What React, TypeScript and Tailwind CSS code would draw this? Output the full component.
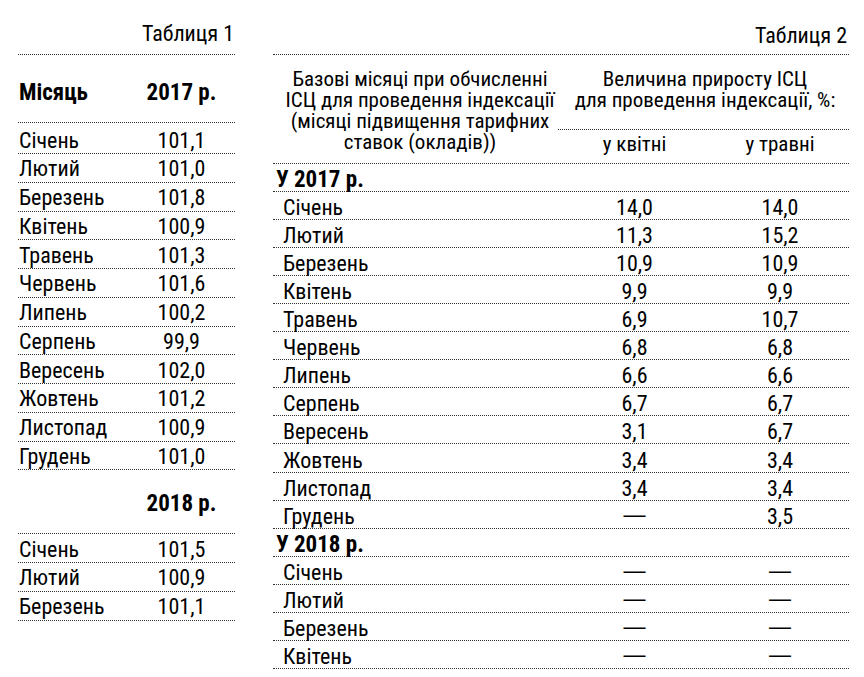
const DOT = "border-b border-dotted border-[#333]";

const t1a: [string, string][] = [
  ["Січень", "101,1"],
  ["Лютий", "101,0"],
  ["Березень", "101,8"],
  ["Квітень", "100,9"],
  ["Травень", "101,3"],
  ["Червень", "101,6"],
  ["Липень", "100,2"],
  ["Серпень", "99,9"],
  ["Вересень", "102,0"],
  ["Жовтень", "101,2"],
  ["Листопад", "100,9"],
  ["Грудень", "101,0"],
];

const t1b: [string, string][] = [
  ["Січень", "101,5"],
  ["Лютий", "100,9"],
  ["Березень", "101,1"],
];

const t2a: [string, string, string][] = [
  ["Січень", "14,0", "14,0"],
  ["Лютий", "11,3", "15,2"],
  ["Березень", "10,9", "10,9"],
  ["Квітень", "9,9", "9,9"],
  ["Травень", "6,9", "10,7"],
  ["Червень", "6,8", "6,8"],
  ["Липень", "6,6", "6,6"],
  ["Серпень", "6,7", "6,7"],
  ["Вересень", "3,1", "6,7"],
  ["Жовтень", "3,4", "3,4"],
  ["Листопад", "3,4", "3,4"],
  ["Грудень", "—", "3,5"],
];

const t2b: [string, string, string][] = [
  ["Січень", "—", "—"],
  ["Лютий", "—", "—"],
  ["Березень", "—", "—"],
  ["Квітень", "—", "—"],
];

function Val({ v }: { v: string }) {
  if (v === "—") {
    return <span className="font-['Liberation_Sans',sans-serif] relative top-[-2px]">—</span>;
  }
  return <>{v}</>;
}

function Row1({ m, v, first }: { m: string; v: string; first?: boolean }) {
  return (
    <div className={`${first ? "h-[31px]" : "h-[28.75px]"} ${DOT} flex items-end`}>
      <div className="w-[110px] leading-none pb-[1.5px] pl-[1px]">{m}</div>
      <div className="flex-1 text-center leading-none pb-[1.5px]">{v}</div>
    </div>
  );
}

function Row2({ m, a, b }: { m: string; a: string; b: string }) {
  return (
    <div className={`h-[28.05px] ${DOT} flex items-end`}>
      <div className="w-[285px] leading-none pl-[10px]">{m}</div>
      <div className="w-[153px] text-center leading-none">
        <Val v={a} />
      </div>
      <div className="flex-1 text-center leading-none">
        <Val v={b} />
      </div>
    </div>
  );
}

function Section2({ label }: { label: string }) {
  return (
    <div className={`h-[28.05px] ${DOT} flex items-end`}>
      <div className="leading-none pl-[3px] font-bold text-[23px]">{label}</div>
    </div>
  );
}

export default function App() {
  return (
    <div className="w-[864px] h-[677px] bg-white text-[#000] font-['Roboto_Condensed','Liberation_Sans',sans-serif] text-[22px] flex">
      {/* Table 1 */}
      <div className="ml-[18px] w-[217px] flex flex-col">
        <div className={`h-[55px] ${DOT} flex items-end justify-end`}>
          <span className="leading-none pb-[9px] pr-[1px]">Таблиця 1</span>
        </div>
        <div className={`h-[68px] ${DOT} flex items-end font-bold text-[23px]`}>
          <div className="w-[110px] leading-none pb-[18px] pl-[1px]">Місяць</div>
          <div className="flex-1 text-center leading-none pb-[18px]">2017 р.</div>
        </div>
        {t1a.map(([m, v], i) => (
          <Row1 key={"a" + m} m={m} v={v} first={i === 0} />
        ))}
        <div className={`h-[64px] ${DOT} flex items-end font-bold text-[23px]`}>
          <div className="w-[110px]" />
          <div className="flex-1 text-center leading-none pb-[18px]">2018 р.</div>
        </div>
        {t1b.map(([m, v]) => (
          <Row1 key={"b" + m} m={m} v={v} />
        ))}
      </div>

      {/* Table 2 */}
      <div className="ml-[38px] w-[576px] flex flex-col">
        <div className={`h-[55px] ${DOT} flex items-end justify-end`}>
          <span className="leading-none pb-[7px] pr-[2px]">Таблиця 2</span>
        </div>
        <div className={`h-[109px] ${DOT} flex`}>
          <div className="w-[285px] pl-[9px] pt-[14px] text-center leading-[21px] text-[21px] whitespace-nowrap">
            Базові місяці при обчисленні
            <br />
            ІСЦ для проведення індексації
            <br />
            (місяці підвищення тарифних
            <br />
            ставок (окладів))
          </div>
          <div className="flex-1 flex flex-col">
            <div className={`h-[75px] ${DOT} pl-[3px] pt-[14px] text-center leading-[21px] text-[21px] whitespace-nowrap`}>
              Величина приросту ІСЦ
              <br />
              для проведення індексації, %:
            </div>
            <div className="flex-1 flex items-end pb-[8px] text-[21px]">
              <div className="w-[153px] text-center leading-none">у квітні</div>
              <div className="flex-1 text-center leading-none">у травні</div>
            </div>
          </div>
        </div>
        <Section2 label="У 2017 р." />
        {t2a.map(([m, a, b]) => (
          <Row2 key={"a" + m} m={m} a={a} b={b} />
        ))}
        <Section2 label="У 2018 р." />
        {t2b.map(([m, a, b]) => (
          <Row2 key={"b" + m} m={m} a={a} b={b} />
        ))}
      </div>
    </div>
  );
}
